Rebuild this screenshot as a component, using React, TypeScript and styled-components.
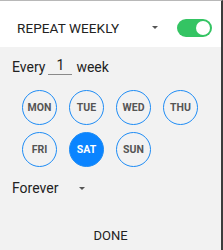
import styled, { createGlobalStyle } from "styled-components";
import { useState } from "react";

const GlobalStyle = createGlobalStyle`
  html, body {
    margin: 0;
    padding: 0;
    background: #ffffff;
  }
  body {
    font-family: Roboto, "Liberation Sans", sans-serif;
  }
`

const Panel = styled.div`
  width: 221px;
  height: 249px;
  border-top: 1px solid #b8b8b8;
  border-right: 2px solid #3c3c3c;
  background-color: #f2f2f2;
  display: flex;
  flex-direction: column;
`

const Header = styled.div`
  display: flex;
  align-items: center;
  height: 39px;
  padding: 7px 9px 0 17px;
  background-color: white;
`

const HeaderTitle = styled.div`
  flex: 1;
  font-size: 13.5px;
  color: #222;
  letter-spacing: 0.1px;
`

const Caret = styled.span<{ $gap?: number }>`
  width: 0;
  height: 0;
  border-left: 3.5px solid transparent;
  border-right: 3.5px solid transparent;
  border-top: 3.5px solid #555;
  margin-right: ${props => props.$gap ?? 0}px;
`

const Toggle = styled.button<{ $on: boolean }>`
  position: relative;
  width: 35px;
  height: 18px;
  border: none;
  padding: 0;
  border-radius: 9px;
  background-color: ${props => props.$on ? '#34c463' : '#c8c8c8'};
  cursor: pointer;

  &::after {
    content: '';
    position: absolute;
    top: 2px;
    left: ${props => props.$on ? '19px' : '2px'};
    width: 14px;
    height: 14px;
    border-radius: 50%;
    background-color: white;
  }
`

const Body = styled.div`
  flex: 1;
  display: flex;
  flex-direction: column;
  padding: 8px 0 0 12px;
`

const EveryRow = styled.div`
  display: flex;
  align-items: flex-end;
  font-size: 14px;
  color: #222;
  height: 20px;
`

const CountInput = styled.div`
  width: 24px;
  margin: 0 4px 0 3px;
  text-align: center;
  border-bottom: 1px solid #8a8a8a;
  line-height: 17px;
`

const DayGrid = styled.div`
  display: grid;
  grid-template-columns: repeat(4, 35px);
  column-gap: 12px;
  row-gap: 7px;
  margin: 15px 0 0 10px;
`

const Day = styled.button<{ $active?: boolean }>`
  width: 35px;
  height: 35px;
  border-radius: 50%;
  border: 1.5px solid #1e8cf5;
  background-color: ${props => props.$active ? '#0a84ff' : 'transparent'};
  color: ${props => props.$active ? 'white' : '#555'};
  font-family: Roboto, "Liberation Sans", sans-serif;
  font-weight: bold;
  font-size: 10.5px;
  padding: 0;
  cursor: pointer;
`

const ForeverRow = styled.div`
  display: flex;
  align-items: center;
  margin-top: 12px;
  font-size: 14px;
  color: #222;
  height: 18px;
`

const ForeverLabel = styled.span`
  width: 67px;
`

const Footer = styled.div`
  margin-top: auto;
  display: flex;
  justify-content: center;
  padding-bottom: 7px;
`

const DoneButton = styled.button`
  border: none;
  background: none;
  font-family: Roboto, "Liberation Sans", sans-serif;
  font-size: 13px;
  color: #222;
  padding: 0;
  cursor: pointer;
`

const days = ['MON', 'TUE', 'WED', 'THU', 'FRI', 'SAT', 'SUN']

const App = () => {
  const [on, setOn] = useState(true)
  const [active, setActive] = useState(5)

  return (
    <>
      <GlobalStyle />
      <Panel>
        <Header>
          <HeaderTitle>REPEAT WEEKLY</HeaderTitle>
          <Caret $gap={19} />
          <Toggle $on={on} onClick={() => setOn(!on)} />
        </Header>
        <Body>
          <EveryRow>
            Every
            <CountInput>1</CountInput>
            week
          </EveryRow>
          <DayGrid>
            {days.map((day, index) => (
              <Day
                key={day}
                $active={active === index}
                onClick={() => setActive(index)}
              >{day}</Day>
            ))}
          </DayGrid>
          <ForeverRow>
            <ForeverLabel>Forever</ForeverLabel>
            <Caret />
          </ForeverRow>
        </Body>
        <Footer>
          <DoneButton>DONE</DoneButton>
        </Footer>
      </Panel>
    </>
  )
}

export default App
